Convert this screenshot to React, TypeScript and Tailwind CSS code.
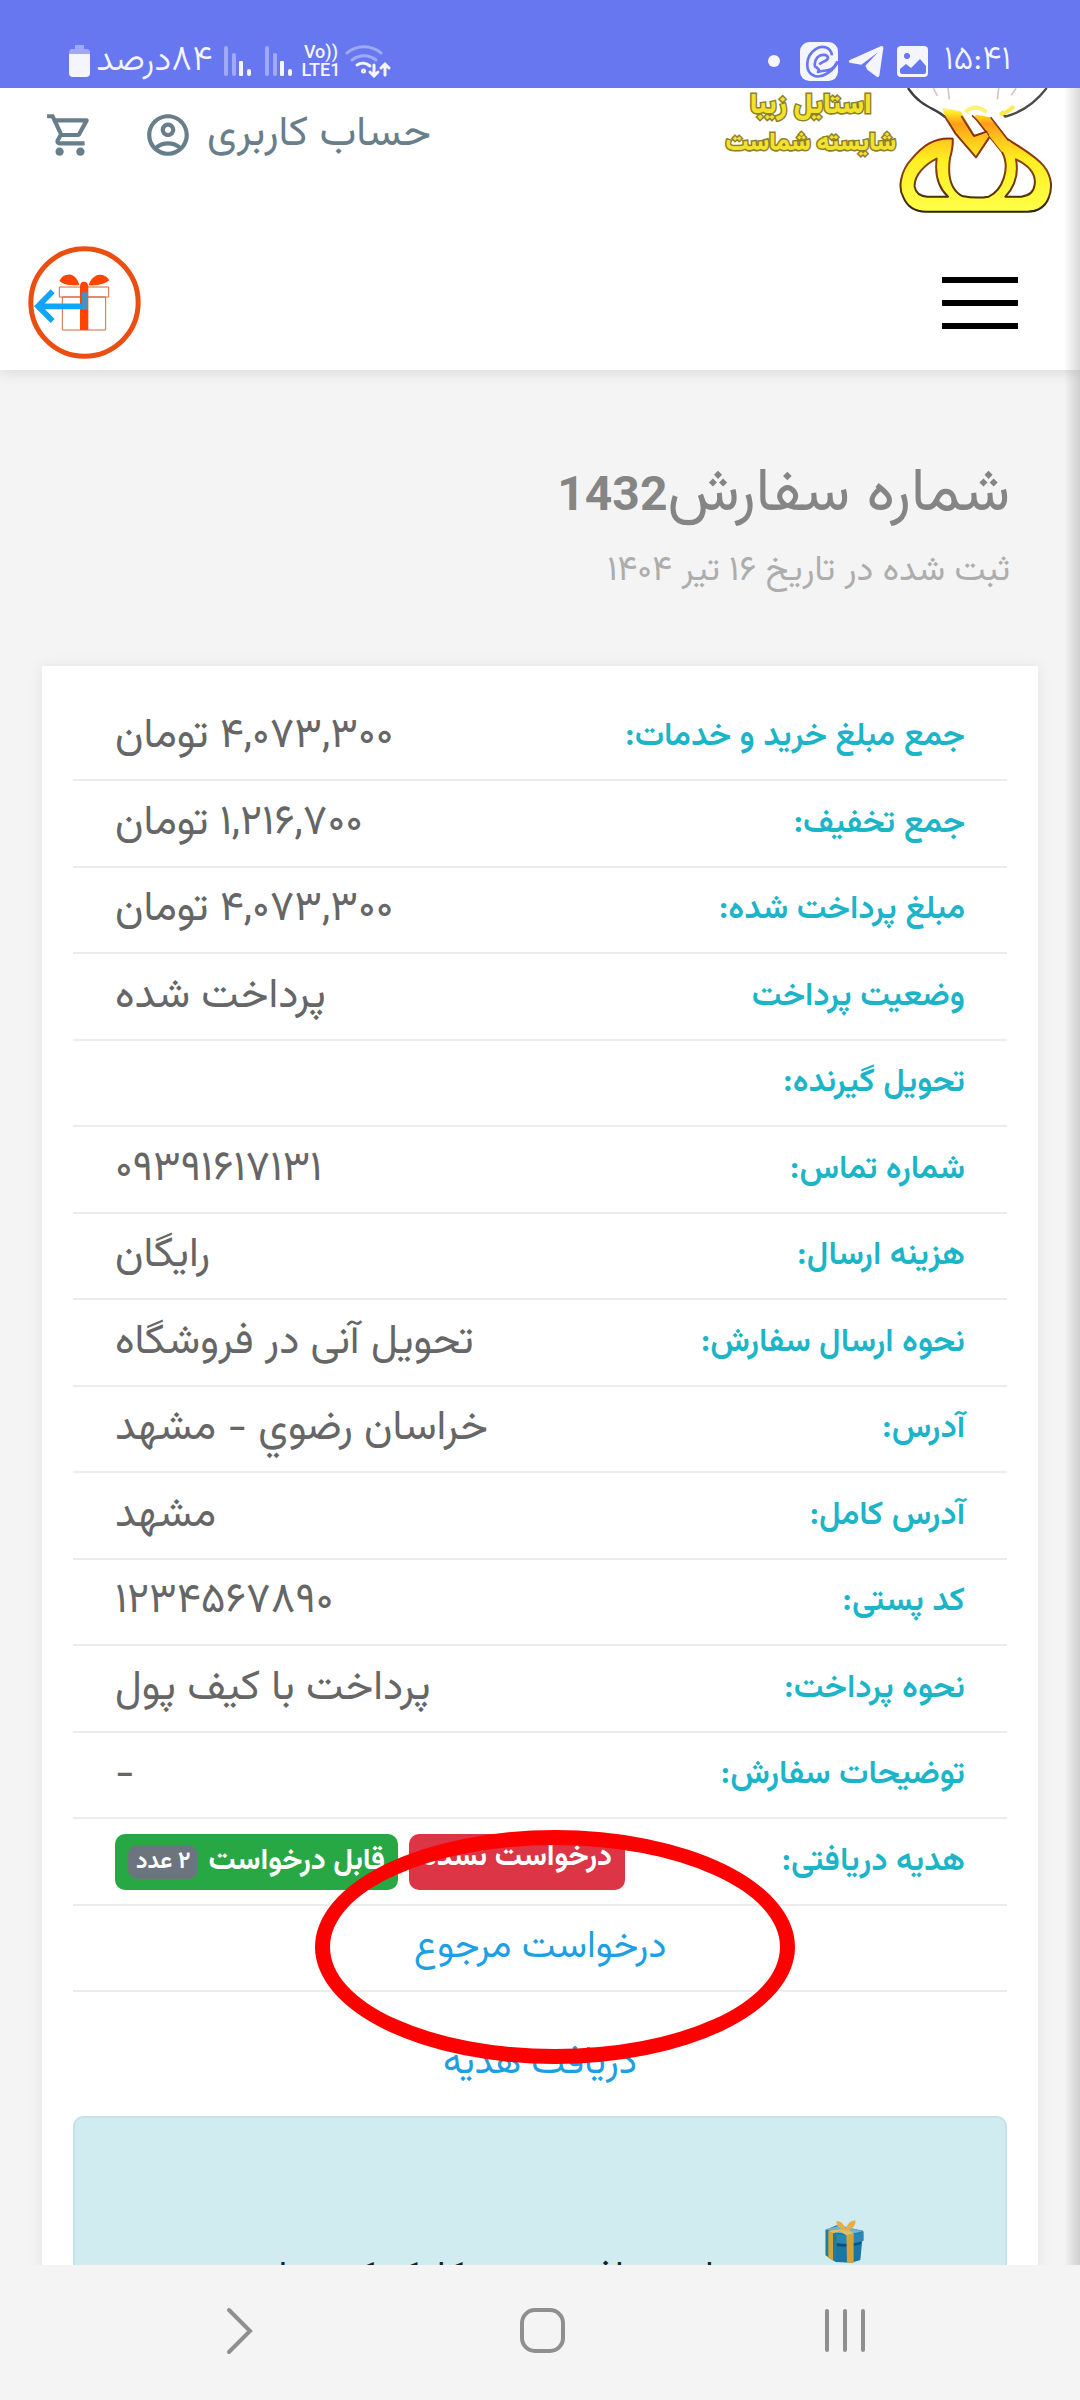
import type { ReactNode } from "react";
import { MdOutlineAccountCircle, MdOutlineShoppingCart } from "react-icons/md";

interface OrderField {
  label: string;
  value: ReactNode;
}

const orderFields: OrderField[] = [
  { label: "جمع مبلغ خرید و خدمات:", value: "۴,۰۷۳,۳۰۰ تومان" },
  { label: "جمع تخفیف:", value: "۱,۲۱۶,۷۰۰ تومان" },
  { label: "مبلغ پرداخت شده:", value: "۴,۰۷۳,۳۰۰ تومان" },
  { label: "وضعیت پرداخت", value: "پرداخت شده" },
  { label: "تحویل گیرنده:", value: "" },
  { label: "شماره تماس:", value: "۰۹۳۹۱۶۱۷۱۳۱" },
  { label: "هزینه ارسال:", value: "رایگان" },
  { label: "نحوه ارسال سفارش:", value: "تحویل آنی در فروشگاه" },
  { label: "آدرس:", value: "خراسان رضوي - مشهد" },
  { label: "آدرس کامل:", value: "مشهد" },
  { label: "کد پستی:", value: "۱۲۳۴۵۶۷۸۹۰" },
  { label: "نحوه پرداخت:", value: "پرداخت با کیف پول" },
  { label: "توضیحات سفارش:", value: "-" },
  { label: "هدیه دریافتی:", value: <GiftBadges /> },
];

function GiftBadges() {
  return (
    <div className="flex justify-end gap-[11px] text-[30px] font-bold text-white">
      <span className="flex h-14 items-center rounded-[10px] bg-[#dc3545] px-[13px] pb-2">
        درخواست نشده
      </span>
      <span className="flex h-14 items-center gap-[10px] rounded-[10px] bg-[#28a745] px-[13px]">
        قابل درخواست
        <span className="flex h-[34px] items-center rounded-[10px] bg-[#6c757d] px-2 text-[23px]">
          ۲ عدد
        </span>
      </span>
    </div>
  );
}

function SignalBars() {
  return (
    <svg width="27" height="30" viewBox="0 0 27 30" fill="#f5f5ff">
      <rect x="0" y="0" width="4" height="30" rx="2" opacity="0.4" />
      <rect x="8" y="7" width="4" height="23" rx="2" opacity="0.4" />
      <rect x="15" y="15" width="4" height="15" rx="1" />
      <rect x="23" y="23" width="4" height="7" rx="2" />
    </svg>
  );
}

function StatusBar() {
  return (
    <div
      dir="ltr"
      className="flex h-[88px] shrink-0 items-center justify-between bg-[#6777f0] pt-[34px] pr-[69px] pl-[69px] text-[#f5f5ff]"
    >
      <div className="flex items-center">
        <svg width="21" height="32" viewBox="0 0 21 32" fill="#f5f5ff">
          <path d="M6 0h9v4h3q3 0 3 4v2H0V8q0-4 3-4h3z" opacity="0.4" />
          <path d="M0 9h21v19q0 4-4 4H4q-4 0-4-4z" />
        </svg>
        <span dir="rtl" className="ml-[6px] text-[36px] leading-[40px] font-light">
          ۸۴درصد
        </span>
        <div className="ml-[12px] flex gap-[14px]">
          <SignalBars />
          <SignalBars />
        </div>
        <div className="ml-[9px] flex flex-col items-center font-['Roboto',sans-serif] text-[18px] leading-[18px] font-medium">
          <span>Vo))</span>
          <span>LTE1</span>
        </div>
        <svg
          className="ml-[5px]"
          width="46"
          height="34"
          viewBox="0 0 46 34"
          fill="none"
          stroke="#f5f5ff"
          strokeWidth="3"
          strokeLinecap="round"
        >
          <path d="M2 9a26 26 0 0 1 34 0" opacity="0.4" />
          <path d="M7 16a19 19 0 0 1 24 0" opacity="0.4" />
          <path d="M12 21a11 11 0 0 1 13 1" />
          <circle cx="18.500" cy="27" r="1" />
          <path d="M29 21v11M25 28l4 4 4-4M40 31V20M36 24l4-4 4 4" />
        </svg>
      </div>

      <div className="flex items-center">
        <span className="mr-[20px] size-3 rounded-full bg-[#f5f5ff]" />
        <svg className="mr-[10px]" width="38" height="39" viewBox="0 0 114 117">
          <rect width="114" height="117" rx="28" fill="#f5f5ff" />
          <path
            d="M112 58C98 92 78 82 54 90C60 78 54 84 50 76C42 78 42 58 52 46C64 34 84 38 84 48C82 60 64 56 58 68M96 40C92 14 64 8 46 22C16 42 14 88 40 100C62 112 96 90 112 62"
            fill="none"
            stroke="#6777f0"
            strokeWidth="8"
            strokeLinejoin="round"
          />
        </svg>
        <svg className="mr-[12px]" width="37" height="33" viewBox="0 0 111 99" fill="#f5f5ff">
          <path d="M4 46 98 4q9-3 8 6L94 92q-2 6-8 3L58 74l-6-12 38-40-50 37L5 53q-5-3-1-7z" />
        </svg>
        <svg className="mr-[16px]" width="31" height="31" viewBox="0 0 31 31">
          <rect width="31" height="31" rx="4" fill="#f5f5ff" />
          <circle cx="10" cy="10" r="3" fill="#6777f0" />
          <path d="M3 23l6-5 5 4 9-9 6 7v6q0 2-2 2H5q-2 0-2-2z" fill="#6777f0" />
        </svg>
        <span className="text-[34px] leading-[40px] font-light">۱۵:۴۱</span>
      </div>
    </div>
  );
}

function Logo() {
  return (
    <svg width="160" height="128" viewBox="528 174 480 384" fill="none">
      <defs>
        <linearGradient id="gold" gradientUnits="userSpaceOnUse" x1="0" y1="174" x2="0" y2="545">
          <stop offset="0" stopColor="#ffffff" />
          <stop offset="0.14" stopColor="#fffdf0" />
          <stop offset="0.2" stopColor="#ffe820" />
          <stop offset="0.29" stopColor="#ff9c1a" />
          <stop offset="0.42" stopColor="#ffc81a" />
          <stop offset="0.58" stopColor="#ffee22" />
          <stop offset="1" stopColor="#ffff48" />
        </linearGradient>
        <linearGradient id="rim" gradientUnits="userSpaceOnUse" x1="0" y1="174" x2="0" y2="545">
          <stop offset="0" stopColor="#777777" />
          <stop offset="0.35" stopColor="#8a2d0a" />
          <stop offset="0.65" stopColor="#8a4210" />
          <stop offset="1" stopColor="#2c2606" />
        </linearGradient>
      </defs>
      <path d="M564 174C606 236 646 232 676 262" stroke="#3f3f3f" strokeWidth="7" />
      <path d="M980 174Q930 240 856 260l-12-14" stroke="#4b4b4b" strokeWidth="7" />
      <path d="M640 174l12 24M684 174l4 34M836 174l-4 34M888 174l-14 22" stroke="#d9c4be" strokeWidth="5" />

      {/* left and right loops, filled shape with its holes cut out */}
      <path
        fillRule="evenodd"
        d="M698 326C640 322 606 350 576 386C540 424 534 474 550 502C562 530 584 545 618 545H922C956 545 976 528 986 504C1000 468 994 428 960 396C930 368 888 344 860 326L806 316L846 366C872 414 848 480 806 500Q768 506 726 498C694 480 682 440 690 384Q700 350 698 326zM650 386C644 434 654 472 684 500H622Q588 498 584 470C582 434 618 402 650 386zM888 388C930 408 948 436 944 464Q940 496 904 500H856C884 470 896 430 888 388z"
        fill="url(#gold)"
        stroke="url(#rim)"
        strokeWidth="6"
        strokeLinejoin="round"
      />

      {/* crossed arms above the loops */}
      <path
        d="M770 254L812 262L862 328L884 350L846 366L806 316L760 262z"
        fill="url(#gold)"
      />
      <path d="M812 262L866 332M756 256l14 14L806 316" stroke="url(#rim)" strokeWidth="5" />
      <path
        d="M664 232L722 244L764 316L800 308L806 322L768 382L706 308L680 268z"
        fill="url(#gold)"
      />
      <path
        d="M672 256L706 310L768 382L808 322M724 258L762 318L802 304"
        stroke="url(#rim)"
        strokeWidth="6"
        strokeLinejoin="round"
      />
      <path d="M736 246q30-26 64 0" stroke="#fff27a" strokeWidth="12" />
      <path d="M844 252q20-6 34-20" stroke="#ffec40" strokeWidth="12" strokeLinecap="round" />
    </svg>
  );
}

function GiftReturnIcon() {
  return (
    <svg width="113" height="113" viewBox="24 19 339 339" fill="none">
      <circle cx="193.500" cy="188.500" r="161" stroke="#ec4d10" strokeWidth="15" />
      <path d="M127 172h130v99H127zM118 142h148v30H118z" stroke="#d2693f" strokeWidth="3" fill="#fff" />
      <path
        d="M118 124q10-22 36-19 18 6 24 31-44 4-60-12zM268 122q-12-20-36-16-20 8-26 31 44 2 62-15z"
        fill="#ff4500"
      />
      <path d="M180 140q0-14 12-14t13 14v131h-25z" fill="#ff4500" />
      <path d="M186 158h18v52h-18z" fill="#4d90c0" />
      <path d="M184 200H58M98 155L54 200l44 44" stroke="#12a5f7" strokeWidth="17" />
    </svg>
  );
}

function GiftBox() {
  return (
    <svg className="shrink-0" width="39" height="43" viewBox="0 0 117 129">
      <path d="M2 30l32-14 80 16-2 26-6 62-26 8-48-2L2 106z" fill="#1a76a6" />
      <path d="M2 28l46-12 66 18-34 8-46-4z" fill="#6fb4cf" />
      <path d="M34 42q44 8 82-8v28q-40 14-82 6z" fill="#2a86b4" />
      <path d="M36 70q30 6 72-4v6q-36 12-72 6z" fill="#0d4f78" />
      <path d="M2 28l32 12v86L2 106z" fill="#28799c" />
      <path d="M10 32l14 6v84l-14-8zM64 42h22v86H66z" fill="#d3a43c" />
      <path d="M10 32l56-6 20 14-22 6-20-12-20 6z" fill="#e6bd5c" />
      <path d="M60 32Q34 22 34 4q18-4 28 24Q70 0 92 2q0 24-28 30z" fill="#e9ad45" />
    </svg>
  );
}

function SiteHeader() {
  return (
    <header className="relative bg-white pb-[11px] shadow-[0_2px_14px_rgba(0,0,0,0.12)]">
      <div className="flex h-[158px] items-start justify-between pr-6 pl-[45px]">
        <a href="#home" className="flex items-start" aria-label="استایل زیبا">
          <Logo />
          <span className="flex flex-col items-center text-[25px] leading-[37px] font-black text-[#f2e22c] [-webkit-text-stroke:3px_#8d7f2a] [paint-order:stroke_fill]">
            <span className="text-[28px]">استایل زیبا</span>
            <span>شایسته شماست</span>
          </span>
        </a>
        <div className="flex items-center gap-12 pt-[22px] text-[#687f8b]">
          <a href="#account" className="flex items-center gap-[14px] text-[42px] leading-[50px]">
            حساب کاربری
            <MdOutlineAccountCircle className="size-[50px]" />
          </a>
          <a href="#cart" aria-label="سبد خرید">
            <MdOutlineShoppingCart className="size-[50px]" />
          </a>
        </div>
      </div>
      <div className="flex items-center justify-between pr-[62px] pl-7">
        <button type="button" aria-label="منو" className="flex w-[76px] flex-col gap-[17px]">
          <span className="h-[6px] bg-black" />
          <span className="h-[6px] bg-black" />
          <span className="h-[6px] bg-black" />
        </button>
        <a href="#gifts" aria-label="هدیه">
          <GiftReturnIcon />
        </a>
      </div>
    </header>
  );
}

function OrderCard() {
  return (
    <section className="mx-[42px] bg-white px-[31px] pt-7 shadow-[0_0_14px_rgba(0,0,0,0.07)]">
      <table className="w-full border-collapse">
        <tbody>
          {orderFields.map((field) => (
            <tr key={field.label} className="h-[86px] border-b-2 border-[#ececec] even:h-[87px]">
              <th
                scope="row"
                className="p-0 pr-[42px] text-right text-[33px] leading-[48px] font-semibold whitespace-nowrap text-[#1cb5c8]"
              >
                {field.label}
              </th>
              <td className="p-0 pl-[42px] text-left text-[42px] leading-[56px] text-[#666]">
                {field.value}
              </td>
            </tr>
          ))}
        </tbody>
      </table>

      <div className="relative text-center text-[38px] leading-[84px] text-[#1e9fe3]">
        <div className="border-b-2 border-[#ececec]">
          <a href="#return">درخواست مرجوع</a>
        </div>
        <div className="pt-[30px] pb-[10px]">
          <a href="#receive-gift">دریافت هدیه</a>
        </div>
        {/* marker around the return link */}
        <div className="pointer-events-none absolute -top-[76px] left-1/2 -ml-[225px] h-[234px] w-[480px] rounded-[50%] border-[15px] border-[#ff0000]" />
      </div>

      <div className="flex items-start gap-[88px] rounded-[10px] border-2 border-[#c3e3e8] bg-[#d1ecf0] pt-[102px] pr-[141px] pb-20 text-[38px] leading-[60px] text-[#1b2224]">
        <GiftBox />
        <p className="pt-[29px] whitespace-nowrap">برای دریافت هدیه کلیک کنید تا</p>
      </div>
    </section>
  );
}

function NavBar() {
  return (
    <nav
      dir="ltr"
      className="flex h-[135px] shrink-0 items-center justify-between bg-[#f4f4f4] pr-[207px] pb-1 pl-[212px]"
    >
      <button type="button" aria-label="بازگشت" className="flex w-14 justify-center">
        <svg width="28" height="48" viewBox="0 0 28 48" fill="none" stroke="#8f8f8f" strokeWidth="4" strokeLinecap="round">
          <path d="M3 3l21 21L3 45" />
        </svg>
      </button>
      <button type="button" aria-label="خانه" className="flex w-14 justify-center">
        <svg width="45" height="45" viewBox="0 0 45 45" fill="none" stroke="#8f8f8f" strokeWidth="4">
          <rect x="2" y="2" width="41" height="41" rx="13" />
        </svg>
      </button>
      <button type="button" aria-label="برنامه‌های اخیر" className="flex w-14 justify-center">
        <svg width="40" height="44" viewBox="0 0 40 44" fill="#8f8f8f">
          <rect x="0" width="4" height="43" rx="2" />
          <rect x="18" width="4" height="43" rx="2" />
          <rect x="36" width="4" height="43" rx="2" />
        </svg>
      </button>
    </nav>
  );
}

export default function App() {
  return (
    <div
      dir="rtl"
      className="flex h-screen flex-col bg-[#f4f4f4] font-['Vazirmatn','DejaVu_Sans',sans-serif]"
    >
      <StatusBar />
      <main className="relative min-h-0 flex-1 overflow-hidden">
        <SiteHeader />
        <div className="pt-[88px] pr-[70px] pb-[69px]">
          <h1 className="text-[61px] leading-[72px] text-[#858585]">
            شماره سفارش
            <span className="font-['Roboto',sans-serif] text-[48px] font-bold">1432</span>
          </h1>
          <p className="mt-4 text-[35px] leading-[50px] text-[#adadad]">
            ثبت شده در تاریخ ۱۶ تیر ۱۴۰۴
          </p>
        </div>
        <OrderCard />
        <div className="pointer-events-none absolute inset-y-0 right-0 w-4 bg-linear-to-l from-black/15 to-transparent" />
      </main>
      <NavBar />
    </div>
  );
}
